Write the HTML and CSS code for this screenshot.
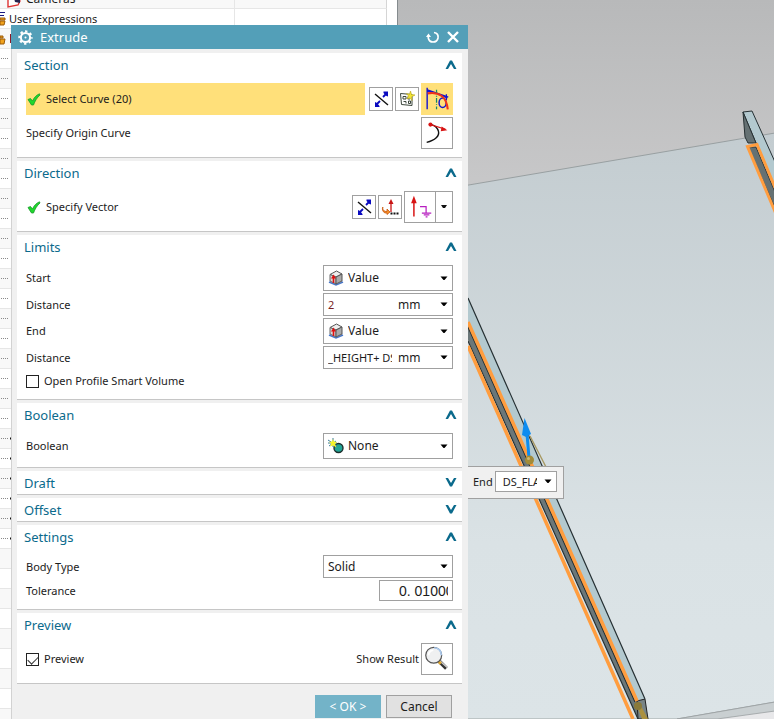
FILE: index.html
```html
<!DOCTYPE html>
<html lang="en">
<head>
<meta charset="utf-8">
<title>Extrude</title>
<link rel="stylesheet" href="styles.css">
</head>
<body>
<svg class="defs" aria-hidden="true">
  <symbol id="up" viewBox="0 0 12 9"><path d="M.5 9 5 .5H7L11.500 9H9L6 4 3 9Z"/></symbol>
  <symbol id="down" viewBox="0 0 12 9"><path d="M.5 0 5 8.500H7L11.500 0H9L6 5 3 0Z"/></symbol>
  <symbol id="drop" viewBox="0 0 8 5"><path d="M.5 .5H7.500L4.500 4H3.500Z"/></symbol>
  <symbol id="check" viewBox="0 0 14 13"><path d="M1 6.500 3.500 5.500 5.500 8C7 4.500 9.500 2 12.500.8L13 2C10 4.500 8 8 6.500 12L4.500 12Z" fill="#1fd82c" stroke="#18982a" stroke-width=".8"/></symbol>
  <symbol id="reverse" viewBox="0 0 18 18">
    <path d="M3 4 16 15" stroke="#111" stroke-width="1.400"/>
    <path d="M11 7 14 4M8 11 5 14" stroke="#0a0ac0" stroke-width="1.800"/>
    <path d="M16 1.500V6.500L14.500 6 11.500 3V1.500ZM3 17V12L5 13 7.500 16V17Z" fill="#0a0ac0"/>
  </symbol>
  <symbol id="cube" viewBox="0 0 16 16">
    <path d="M1 12 8 15 15 12" fill="none" stroke="#4776c8" stroke-width="1.600"/>
    <path d="M2 4.500 8.500 1 14 4 8 7Z" fill="#eee" stroke="#555"/>
    <path d="M2 4.500 8 7V14L2 11Z" fill="#d7d7d7" stroke="#666"/>
    <path d="M8 7 14 4V11L8 14Z" fill="#aaa" stroke="#555"/>
    <path d="M5.500 13V7" stroke="#e01010" stroke-width="1.600"/><path d="M5.500 4.500 8 8.500H3Z" fill="#e01010"/>
  </symbol>
</svg>

<div class="desktop">
  <aside class="tree">
    <div class="tree-row first">
      <svg class="camera" viewBox="0 0 16 12"><path d="M1 1V11L11 9 13 5 8 1" fill="#fff" stroke="#d33" stroke-width="1.400"/><path d="M7 2H13V7L8 6Z" fill="#262650"/></svg>
      <span>Cameras</span>
    </div>
    <div class="tree-row">
      <svg class="cup" viewBox="0 0 9 16"><path d="M0 1.500H5M0 4.500H4" stroke="#1a1a80"/><path d="M0 7H5V9H0ZM0 10H5L4 14H0Z" fill="#f0a21c" stroke="#9b5b08"/></svg>
      <span>User Expressions</span>
    </div>
    <div class="tree-row">
      <svg class="cup" viewBox="0 0 9 16"><path d="M0 5H3V7H0ZM0 8H5L4 13H0Z" fill="#f0a21c" stroke="#9b5b08"/></svg>
      <span class="marker"></span>
    </div>
    <div class="tree-fill">
      <svg class="dots" viewBox="0 0 12 500">
        <pattern id="dotted" width="2" height="20" patternUnits="userSpaceOnUse"><path d="M1 9H2V10H1Z" fill="#8a8a8a"/></pattern>
        <path d="M0 0H8V490H0Z" fill="url(#dotted)"/>
        <path d="M10 389.500H12M10 409.500H12M10 429.500H12M10 449.500H12M10 469.500H12M10 489.500H12" stroke="#111" stroke-width="2"/>
      </svg>
    </div>
  </aside>

  <main class="viewport">
    <svg class="scene" viewBox="398 0 376 719" preserveAspectRatio="xMinYMin slice" role="img" aria-label="Model view">
      <defs>
        <linearGradient id="sky" gradientUnits="userSpaceOnUse" x1="0" y1="0" x2="0" y2="719"><stop offset="0" stop-color="#b8b9ba"/><stop offset=".3" stop-color="#cacacb"/><stop offset="1" stop-color="#e8e8ea"/></linearGradient>
        <linearGradient id="floor" gradientUnits="userSpaceOnUse" x1="0" y1="130" x2="0" y2="719"><stop offset="0" stop-color="#c3ccd0"/><stop offset=".7" stop-color="#dae2e5"/><stop offset="1" stop-color="#dce4e7"/></linearGradient>
      </defs>
      <path d="M398 0H774V719H398Z" fill="url(#sky)"/>
      <path d="M398 197 775 133V702L677 719H398Z" fill="url(#floor)" stroke="#8d9496" stroke-width=".8"/>
      <path d="M677 719 775 702V711L717 719Z" fill="#c9cfd1" stroke="#9a9fa1" stroke-width=".8"/>

      <path d="M468 298 645 699 637 701 468 322Z" fill="#b3c9cf"/>
      <path d="M468 323 637 701 638 719 468 340Z" fill="#6b7779"/>
      <path d="M637 701 645 699 648 719H638Z" fill="#788486" stroke="#222"/>
      <path d="M468 298 645 699M468 341 638 719M468 327 635 702" fill="none" stroke="#263033" stroke-width="1.200"/>
      <path d="M468 322 637 701M468 346 633 719" stroke="#ff9d3f" stroke-width="3.500"/>
      <path d="M637 706 640 704 648 719H642Z" fill="#ab9140"/><circle cx="638" cy="706" r="4" fill="#8a7a3a"/>

      <path d="M743 112 752 111 775 162V189L756 143Z" fill="#b3c9cf" stroke="#263033"/>
      <path d="M743 112 745 137 748 143H756Z" fill="#657173" stroke="#263033"/>
      <path d="M748 147H756L775 192V208Z" fill="#657173" stroke="#263033"/>
      <path d="M776 214 747.500 146.500 757 144.500 776 190" fill="none" stroke="#ff9d3f" stroke-width="3"/>

      <path d="M530 436 546 467" stroke="#a79861" stroke-width="1.400"/>
      <path d="M529 458 527 434" stroke="#0d8cf0" stroke-width="3"/>
      <path d="M524.500 418 531 434 526 437 522 435Z" fill="#0d8cf0"/>
      <circle cx="529.500" cy="460" r="4.500" fill="#a28b38"/><circle cx="528.500" cy="458.500" r="1.500" fill="#c8b774"/>
    </svg>
  </main>
</div>

<form class="floating">
  <label for="end-value">End</label>
  <span class="combo mini">
    <input id="end-value" type="text" value="DS_FLANGE">
    <svg class="drop"><use href="#drop"/></svg>
  </span>
</form>

<form class="dialog">
  <header class="title">
    <svg class="gear" viewBox="0 0 15 15"><circle cx="7.500" cy="7.500" r="4.600" fill="none" stroke="#fff" stroke-width="2"/><circle cx="7.500" cy="7.500" r="6.200" fill="none" stroke="#fff" stroke-width="2" stroke-dasharray="2.400 2.470" stroke-dashoffset="1.200"/><circle cx="7.500" cy="7.500" r="1" fill="#fff"/></svg>
    <h1>Extrude</h1>
    <button type="button" class="bare" aria-label="Reset"><svg viewBox="0 0 14 14"><path d="M8 2.500C11 3 12.500 5 12 8 11.500 10.500 9.500 12 7 12 4.500 12 2.800 10.500 2.300 8V5" fill="none" stroke="#fff" stroke-width="1.700"/><path d="M0 7 2.500 3.500 5 7Z" fill="#fff"/></svg></button>
    <button type="button" class="bare" aria-label="Close"><svg viewBox="0 0 14 14"><path d="M2 2 12 12M12 2 2 12" stroke="#fff" stroke-width="2.400"/></svg></button>
  </header>

  <section>
    <h2><button type="button">Section <svg><use href="#up"/></svg></button></h2>
    <div class="rows">
      <div class="row pick">
        <div class="selected"><svg class="check"><use href="#check"/></svg>Select Curve (20)</div>
        <button type="button" class="tool small" aria-label="Reverse Direction"><svg viewBox="0 0 18 18"><use href="#reverse"/></svg></button>
        <button type="button" class="tool small" aria-label="Sketch Section"><svg viewBox="0 0 18 18"><path d="M2.500 3.500 14 4.500V15.500L3.500 14.500ZM5 6.500H8V9H5ZM5.500 11.500H8V13.500M10.500 11H12.500V13.500H10.500ZM10 6.500V9H12" fill="none" stroke="#3c473c"/><path d="M12.500 1 13.500 4.500 17 5 13.700 6.800 14 10.500 12 8 9 9 10.500 6 8.500 3.500 11.500 4.300Z" fill="#f2e533" stroke="#b9a51c" stroke-width=".6"/></svg></button>
        <button type="button" class="tool large active" aria-label="Curve"><svg viewBox="0 0 32 32"><path d="M5.500 4V27M5 6 28 14M5 8H10" stroke="#1414d0" stroke-width="1.500"/><path d="M15.500 6V27" stroke="#12876e" stroke-width="1.300" stroke-dasharray="5 1.500 1 1.500"/><ellipse cx="22" cy="20" rx="3.800" ry="5" fill="none" stroke="#1414d0" stroke-width="1.600"/><path d="M26 11V17M21 12 27 15" stroke="#1414d0" stroke-width="1.400"/><path d="M6 10C18 8 26 13 27.500 27" fill="none" stroke="#f03318" stroke-width="2.200"/></svg></button>
      </div>
      <div class="row">
        <span class="name">Specify Origin Curve</span>
        <button type="button" class="tool large" aria-label="Specify Origin Curve"><svg viewBox="0 0 32 32"><path d="M5 26C14 24 19 19 17.500 14 16.500 10.500 14 8 10 7" fill="none" stroke="#111" stroke-width="1.500"/><path d="M9 7 25 12" stroke="#d81414" stroke-width="1.300"/><circle cx="9" cy="7" r="2.200" fill="#d81414"/><path d="M21 9 27 13 20 14Z" fill="#d81414"/></svg></button>
      </div>
    </div>
  </section>

  <section>
    <h2><button type="button">Direction <svg><use href="#up"/></svg></button></h2>
    <div class="rows">
      <div class="row vector">
        <div class="selected plain"><svg class="check"><use href="#check"/></svg>Specify Vector</div>
        <button type="button" class="tool small" aria-label="Reverse Vector"><svg viewBox="0 0 18 18"><use href="#reverse"/></svg></button>
        <button type="button" class="tool small" aria-label="Vector Dialog"><svg viewBox="0 0 18 18"><path d="M10 14V5" stroke="#c81414" stroke-width="1.300"/><path d="M10 1 12.500 6H7.500Z" fill="#c81414"/><path d="M2 9C1.500 11 2 12.500 4 13.300L6 13.500V11L9 14 6 16.500V15C3 15.500 1 13 1.500 9.500Z" fill="#f7922c" stroke="#c7560c" stroke-width=".8"/><path d="M9.500 15.500H17.500" stroke="#111" stroke-width="2" stroke-dasharray="2 1"/></svg></button>
        <div class="split">
          <button type="button" class="tool large" aria-label="Vector type"><svg viewBox="0 0 32 32"><path d="M9.500 26V9" stroke="#d81414" stroke-width="1.600"/><path d="M9.500 4 12.500 12H6.500Z" fill="#d81414"/><path d="M16 15.500H22.500V22M18 22.500H28M20 24.500H26M22 26.500H24" fill="none" stroke="#b71fc0" stroke-width="1.300"/></svg></button>
          <button type="button" class="tool narrow" aria-label="More vector types"><svg viewBox="0 0 6 4"><path d="M0 0H6L4 3H2Z" fill="#111"/></svg></button>
        </div>
      </div>
    </div>
  </section>

  <section>
    <h2><button type="button">Limits <svg><use href="#up"/></svg></button></h2>
    <div class="rows">
      <div class="row"><label class="name" for="start">Start</label>
        <span class="combo tall icon"><svg class="lead"><use href="#cube"/></svg><select id="start"><option>Value</option></select><svg class="drop"><use href="#drop"/></svg></span></div>
      <div class="row"><label class="name" for="d1">Distance</label>
        <span class="combo measure"><input id="d1" class="number" type="text" value="2"><select aria-label="Start unit"><option>mm</option></select><svg class="drop"><use href="#drop"/></svg></span></div>
      <div class="row"><label class="name" for="end">End</label>
        <span class="combo tall icon"><svg class="lead"><use href="#cube"/></svg><select id="end"><option>Value</option></select><svg class="drop"><use href="#drop"/></svg></span></div>
      <div class="row"><label class="name" for="d2">Distance</label>
        <span class="combo measure"><input id="d2" type="text" value="_HEIGHT+ DS"><select aria-label="End unit"><option>mm</option></select><svg class="drop"><use href="#drop"/></svg></span></div>
      <label class="tick"><input type="checkbox">Open Profile Smart Volume</label>
    </div>
  </section>

  <section>
    <h2><button type="button">Boolean <svg><use href="#up"/></svg></button></h2>
    <div class="rows">
      <div class="row"><label class="name" for="bool">Boolean</label>
        <span class="combo tall icon"><svg class="lead" viewBox="0 0 16 16"><circle cx="10.500" cy="10" r="4.500" fill="#21a596" stroke="#1c2e2c" stroke-width="1.400"/><path d="M0 2 9 8M1 8 8 3M5 0V9M0 5H9" stroke="#3a7d9c"/><path d="M5 1 6 3.500 9 4 7 6 8.500 9.500 5 7.500 2 8.500 3.200 5.700 1 4 4 3.500Z" fill="#f6f32c"/></svg><select id="bool"><option>None</option></select><svg class="drop"><use href="#drop"/></svg></span></div>
    </div>
  </section>

  <section><h2><button type="button">Draft <svg><use href="#down"/></svg></button></h2></section>
  <section><h2><button type="button">Offset <svg><use href="#down"/></svg></button></h2></section>

  <section>
    <h2><button type="button">Settings <svg><use href="#up"/></svg></button></h2>
    <div class="rows">
      <div class="row"><label class="name" for="body">Body Type</label>
        <span class="combo"><select id="body"><option>Solid</option></select><svg class="drop"><use href="#drop"/></svg></span></div>
      <div class="row"><label class="name" for="tol">Tolerance</label><input id="tol" class="tolerance" type="text" value="0. 01000"></div>
    </div>
  </section>

  <section>
    <h2><button type="button">Preview <svg><use href="#up"/></svg></button></h2>
    <div class="rows">
      <div class="row"><label class="tick name"><input type="checkbox" checked>Preview</label>
        <span id="result">Show Result</span>
        <button type="button" class="tool large" aria-labelledby="result"><svg viewBox="0 0 32 32"><path d="M18 18 26 26" stroke="#333" stroke-width="4"/><path d="M18 17 27 25" stroke="#ccc" stroke-width="1.500"/><path d="M18 19 20 21" stroke="#e2a92c" stroke-width="3"/><circle cx="12.500" cy="12" r="8.500" fill="#eff0f1" stroke="#555" stroke-width="1.300"/><path d="M13 4C18 4 21 8 20.500 12" fill="none" stroke="#a9c9ee" stroke-width="1.800"/><path d="M7 12C7 9 9 7 12 6.500" fill="none" stroke="#fff" stroke-width="2"/></svg></button></div>
    </div>
  </section>

  <footer>
    <button type="submit" class="action primary">&lt; OK &gt;</button>
    <button type="button" class="action">Cancel</button>
  </footer>
</form>
</body>
</html>
```
FILE: styles.css
```css
* { box-sizing: border-box; }

body {
  margin: 0;
  min-height: 100vh;
  position: relative;
  overflow: hidden;
  color: #1c1c1c;
  font: 11px/16px "Noto Sans", "Open Sans", sans-serif;
}

button, input, select {
  margin: 0;
  padding: 0;
  border: 0;
  border-radius: 0;
  background: none;
  color: inherit;
  font: inherit;
}

select { appearance: none; font-size: 12px; }
svg { display: block; flex: none; }
.defs { position: absolute; width: 0; height: 0; }

/* Application behind the dialog */
.desktop {
  display: grid;
  grid-template-columns: 398px 1fr;
  height: 100vh;
}

.tree {
  display: flex;
  flex-direction: column;
  overflow: hidden;
  padding-right: 10px;
  border-right: 1px solid #858b8e;
  background: #fff;
}

.tree-row {
  display: flex;
  flex: none;
  align-items: center;
  height: 20px;
  border-right: 1px solid #d5d5d5;
  border-bottom: 1px solid #e6e6e6;
  background: linear-gradient(90deg, transparent 234px, #e6e6e6 234px 235px, transparent 235px);
  white-space: nowrap;
}
.tree-row:nth-child(odd) { background-color: #f8f8f8; }
.tree-row.first { height: 9px; align-items: flex-end; gap: 3px; padding-left: 7px; font-size: 12px; line-height: 18px; }
.camera { width: 16px; height: 12px; }
.cup { width: 9px; height: 16px; }
.marker { width: 2px; height: 9px; margin-left: 1px; background: #8b1a28; }

.tree-fill {
  flex: 1;
  border-right: 1px solid #d5d5d5;
  background: repeating-linear-gradient(#fff 0 19px, #e6e6e6 19px 20px, #f8f8f8 20px 39px, #e6e6e6 39px 40px);
}
.dots { width: 12px; height: 500px; }

.viewport { min-width: 0; overflow: hidden; }
.scene { width: 100%; height: 100%; }

.floating {
  position: absolute;
  left: 467px;
  top: 466px;
  display: flex;
  align-items: center;
  gap: 2px;
  padding: 4px 6px 6px 5px;
  border: 1px solid #a0a0a0;
  background: #f0f0f0;
}

/* Dialog window */
.dialog {
  position: absolute;
  left: 11px;
  top: 25px;
  bottom: 0;
  display: flex;
  flex-direction: column;
  gap: 3px;
  width: 457px;
  padding: 0 6px 0 5px;
  border-left: 1px solid #d2d2d2;
  background: #f0f0f0;
}

.title {
  display: flex;
  align-items: center;
  gap: 6px;
  height: 24px;
  margin: 0 -6px 1px;
  padding: 0 8px 0 7px;
  background: #539fb8;
  color: #fff;
}
.title h1 { flex: 1; margin: 0; font-size: 13px; font-weight: 400; }
.gear { width: 15px; height: 15px; }
.gear + h1 { padding-left: 1px; }
.bare svg { width: 14px; height: 14px; }

section {
  border-bottom: 1px solid #c6c6c6;
  background: #fff;
}
h2 { margin: 0; font-size: 13px; font-weight: 400; color: #0b6a8c; }
h2 button {
  display: flex;
  align-items: center;
  justify-content: space-between;
  width: 100%;
  height: 23px;
  padding: 0 5px 0 7px;
}
h2 svg { width: 12px; height: 9px; fill: #0b6a8c; }

.rows {
  display: flex;
  flex-direction: column;
  gap: 2px;
  padding: 7px 9px 8px;
}
.row { display: flex; align-items: center; gap: 2px; }
.name { flex: 1; }

.selected {
  display: flex;
  flex: 1;
  align-items: center;
  gap: 5px;
  height: 32px;
  margin-right: 2px;
  padding-left: 1px;
  background: #ffe07a;
}
.selected.plain { background: none; }
.check { width: 14px; height: 13px; }

.tool { display: grid; place-items: center; border: 1px solid #a0a0a0; background: #fff; }
.tool svg { width: 100%; height: 100%; }
.small { width: 24px; height: 24px; padding: 2px; }
.large { width: 32px; height: 32px; }
.active { border-color: #ffe07a; background: #ffe07a; }
.split { display: flex; }
.narrow { width: 18px; height: 32px; margin-left: -1px; }
.tool.narrow svg { width: 6px; height: 4px; }

.combo {
  display: grid;
  align-items: center;
  width: 130px;
  height: 23px;
  border: 1px solid #a0a0a0;
  background: #fff;
}
.combo > * { grid-area: 1 / 1; }
.combo select { width: 100%; height: 100%; padding-left: 4px; }
.tall { height: 26px; }
.icon select { padding-left: 24px; }
.lead { width: 16px; height: 16px; margin-left: 4px; }
.drop { justify-self: end; width: 8px; height: 5px; margin-right: 4px; pointer-events: none; }
.measure { grid-template-columns: 70px 1fr; }
.measure input { width: 64px; margin-left: 4px; }
.measure select, .measure .drop { grid-column: 2; }
.number { color: #7a1f1f; }
.mini { width: 62px; height: 21px; }
.mini input { width: 34px; margin-left: 7px; }

.tick { display: flex; align-items: center; gap: 5px; height: 20px; }
.tick input {
  appearance: none;
  width: 13px;
  height: 13px;
  border: 1px solid #222;
  background: #fff;
}
.tick input:checked::before {
  content: "";
  display: block;
  width: 9px;
  height: 5px;
  margin: 2px 1px;
  border: solid #333;
  border-width: 0 0 1px 1px;
  transform: rotate(-45deg);
}

.tolerance {
  width: 74px;
  height: 21px;
  padding: 0 4px 0 19px;
  border: 1px solid #a0a0a0;
  font-family: "Liberation Sans", sans-serif;
  font-size: 14px;
}

footer {
  display: flex;
  justify-content: flex-end;
  gap: 5px;
  padding: 8px 10px 0;
}
.action {
  width: 66px;
  height: 23px;
  border: 1px solid #a0a0a0;
  background: #e1e1e1;
  font-size: 12px;
}
.primary { border-color: #73b3c8; background: #73b3c8; color: #fff; }
```
